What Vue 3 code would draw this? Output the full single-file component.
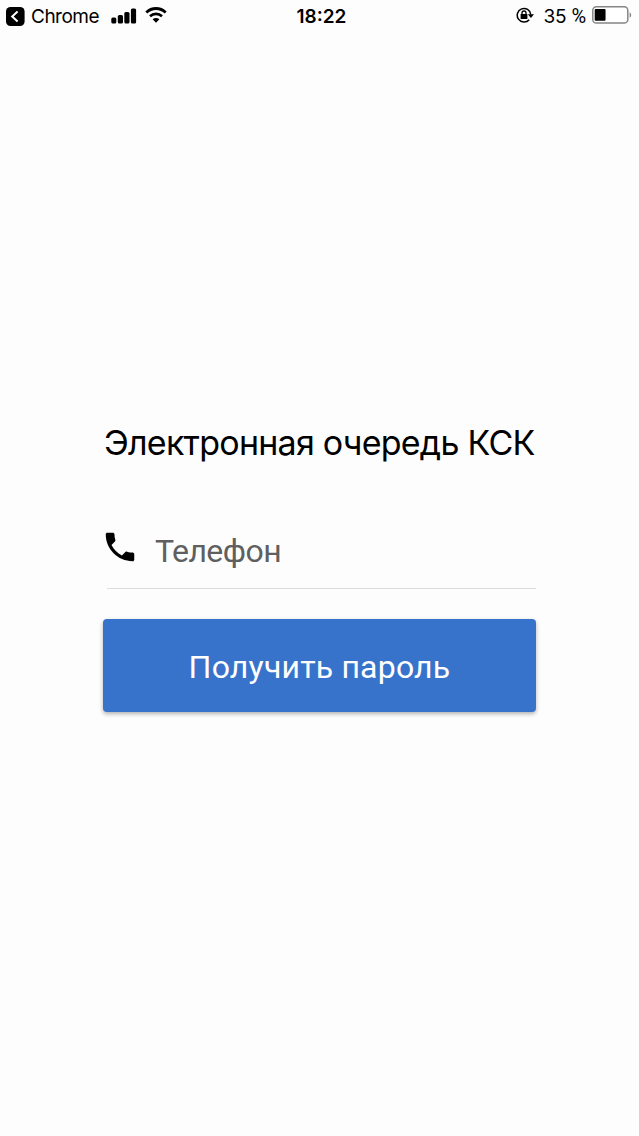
<template>
  <div class="screen">
    <header class="status-bar">
      <div class="status-left">
        <svg class="back-icon" width="19" height="19" viewBox="0 0 19 19">
          <rect width="18.6" height="19" rx="4.5" fill="#000" />
          <path d="M11.6 4.6L6.2 9.5l5.4 4.9" fill="none" stroke="#fff" stroke-width="2" />
        </svg>
        <span class="back-label">Chrome</span>
        <svg class="signal-icon" width="26" height="16" viewBox="0 0 26 16">
          <rect x="0.3" y="9.5" width="5" height="6" rx="1.5" />
          <rect x="6.8" y="7" width="5.2" height="8.5" rx="1.5" />
          <rect x="13.3" y="4" width="5.2" height="11.5" rx="1.5" />
          <rect x="19.9" y="0.5" width="5.2" height="15" rx="1.5" />
        </svg>
        <svg class="wifi-icon" width="22" height="16" viewBox="0 0 22 16">
          <path d="M1.3 5.4C6.7.2 15.3.2 20.7 5.4" fill="none" stroke="#000" stroke-width="2.8" />
          <path d="M5 9.3c3.4-3.2 8.6-3.2 12 0" fill="none" stroke="#000" stroke-width="2.6" />
          <path d="M7.6 12.2c2-1.7 4.8-1.7 6.8 0L11 15.7z" />
        </svg>
      </div>
      <time class="clock">{{ time }}</time>
      <div class="status-right">
        <svg class="lock-icon" width="19" height="17" viewBox="0 0 19 17">
          <path d="M13.2 12.7A6.8 6.8 0 1 1 14.8 7.5" fill="none" stroke="#000" stroke-width="1.5" />
          <path d="M11.8 7.3h6.2l-3.1 3.8z" />
          <rect x="4.6" y="7" width="6.8" height="5" rx="0.6" />
          <path d="M6 7.4V6a2 2 0 0 1 4 0v1.4" fill="none" stroke="#000" stroke-width="1.3" />
        </svg>
        <span class="battery-label">{{ battery }} <span class="percent">%</span></span>
        <svg class="battery-icon" width="40" height="18" viewBox="0 0 40 18">
          <rect x="0.8" y="0.8" width="35" height="16.2" rx="3.6" fill="#fff" stroke="#858585" stroke-width="1.5" />
          <rect x="2.7" y="3" :width="battery * 0.31" height="11.8" rx="1" />
          <path d="M37.6 6.2c2.1 1 2.1 4.6 0 5.6z" fill="#858585" />
        </svg>
      </div>
    </header>

    <form class="login" @submit.prevent>
      <h1 class="title">Электронная очередь КСК</h1>
      <label class="field">
        <svg class="phone-icon" width="38" height="38" viewBox="0 0 24 24">
          <path d="M6.62 10.79c1.44 2.83 3.76 5.14 6.59 6.59l2.2-2.2c.27-.27.67-.36 1.02-.24 1.12.37 2.33.57 3.57.57.55 0 1 .45 1 1V20c0 .55-.45 1-1 1-9.39 0-17-7.61-17-17 0-.55.45-1 1-1h3.5c.55 0 1 .45 1 1 0 1.25.2 2.45.57 3.57.11.35.03.74-.25 1.02l-2.2 2.2z" />
        </svg>
        <input v-model="phone" class="phone-input" type="tel" placeholder="Телефон" />
      </label>
      <button class="submit" type="submit">
        <span class="submit-label">Получить пароль</span>
      </button>
    </form>
  </div>
</template>

<script setup>
import { ref } from 'vue';

const time = '18:22';
const battery = 35;

const phone = ref('');
</script>

<style>
body {
  margin: 0;
  background: #fdfdfd;
}
</style>

<style scoped>
.screen {
  display: flex;
  flex-direction: column;
  width: 639px;
  height: 1136px;
  overflow: hidden;
  background: #fdfdfd;
  color: #000;
  font-family: Inter, "Liberation Sans", sans-serif;
}

.status-bar {
  display: grid;
  grid-template-columns: 1fr auto 1fr;
  align-items: center;
  height: 32px;
  padding: 0 7px 0 6px;
  font-size: 19px;
  line-height: 30px;
}

.status-left,
.status-right {
  display: flex;
  align-items: center;
}

.status-right {
  justify-content: flex-end;
}

.back-label {
  margin-left: 6px;
  padding-top: 1px;
  letter-spacing: -0.5px;
}

.signal-icon {
  margin: -1px 0 0 12px;
}

.wifi-icon {
  margin: -2px 0 0 8px;
}

.clock {
  padding: 1px 0 0 5px;
  font-weight: 600;
}

.lock-icon {
  margin-top: -1px;
}

.battery-label {
  margin-left: 9px;
  padding-top: 1px;
  letter-spacing: -0.2px;
}

.percent {
  font-family: Roboto, sans-serif;
  font-size: 20px;
  line-height: 1;
}

.battery-icon {
  margin: -2px 0 0 6px;
}

.login {
  display: flex;
  flex-direction: column;
  width: 432px;
  margin: 390px 0 0 104px;
}

.title {
  margin: 0;
  font-size: 34px;
  font-weight: 400;
  line-height: 42px;
  letter-spacing: -0.76px;
  white-space: nowrap;
}

.field {
  display: flex;
  align-items: center;
  height: 76px;
  margin: 48px 0 0 3px;
  border-bottom: 1px solid #dcdcde;
}

.phone-icon {
  flex: none;
  margin: -6px 0 0 -6px;
}

.phone-input {
  flex: 1;
  min-width: 0;
  height: 42px;
  margin: 2px 0 0 16px;
  padding: 0;
  border: none;
  outline: none;
  background: none;
  font-family: Roboto, sans-serif;
  font-size: 32px;
  letter-spacing: -0.55px;
}

.phone-input::placeholder {
  color: #5f5f61;
  opacity: 1;
}

.submit {
  height: 93px;
  margin: 30px 0 0 -1px;
  padding: 2px 0 0;
  border: none;
  border-radius: 4px;
  background: #3873cb;
  box-shadow: 0 2px 4px rgba(0, 0, 0, 0.3);
  color: #fff;
  font-family: Roboto, sans-serif;
  font-size: 32px;
  letter-spacing: 0.2px;
}
</style>
